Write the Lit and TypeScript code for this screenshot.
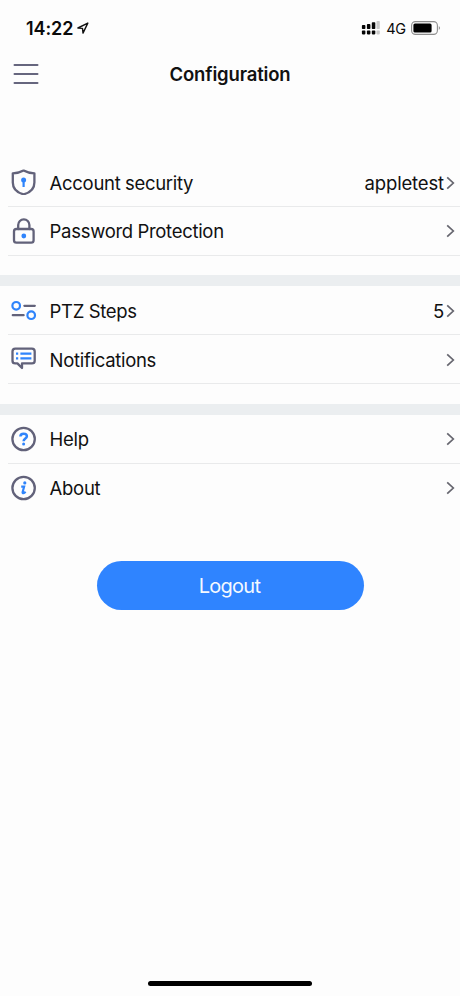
import { LitElement, html, css, svg, nothing, type TemplateResult } from "lit";
import { customElement, property } from "lit/decorators.js";

const icons: Record<string, TemplateResult> = {
  shield: svg`
    <path class="ink" d="M13 1.6C10 3.4 5.6 4.2 2.2 4.3V13.4C2.2 19.4 6.6 23.6 13 25.3C19.4 23.6 23.8 19.4 23.8 13.4V4.3C20.4 4.2 16 3.4 13 1.6Z"/>
    <circle class="dot" cx="13" cy="11" r="2.5"/>
    <path class="blue" d="M13 12V18"/>`,
  lock: svg`
    <path class="ink" d="M7.6 11V7A5.6 5.6 0 0 1 18.8 7V11"/>
    <rect class="ink" x="3.4" y="11" width="19.6" height="13.6" rx="2.4"/>
    <circle class="dot" cx="13.2" cy="18" r="2.4"/>`,
  steps: svg`
    <circle class="blue" cx="5.6" cy="8.8" r="3.8"/>
    <circle class="blue" cx="20.6" cy="18.2" r="3.8"/>
    <path class="ink" d="M13.8 8.8H24.2M2.2 18.2H13"/>`,
  message: svg`
    <path class="ink" d="M4.7 2.7H21.3Q24.1 2.7 24.1 5.4V14.7Q24.1 17.4 21.3 17.4H11.4V22L6.8 17.4H4.7Q1.9 17.4 1.9 14.7V5.4Q1.9 2.7 4.7 2.7Z"/>
    <path class="blue" d="M5.4 7.6H7.6M9.8 7.6H20.8M5.4 12.4H7.6M9.8 12.4H20.8"/>`,
  help: svg`
    <circle class="ink" cx="13" cy="13" r="11.2"/>
    <path class="blue bold" d="M9.8 10.6C9.8 8.6 11.1 7.7 13 7.7C15 7.7 16.3 8.7 16.3 10.3C16.3 12.6 13 12.6 13 15.3"/>
    <circle class="dot" cx="13" cy="18" r="1.5"/>`,
  info: svg`
    <circle class="ink" cx="13" cy="13" r="11.2"/>
    <circle class="dot" cx="14.2" cy="7.9" r="1.6"/>
    <path class="blue" d="M10.6 11.7H13.5L12 17.2C11.8 18.6 13.4 18.4 15 16.8"/>`,
};

@customElement("status-bar")
class StatusBar extends LitElement {
  static styles = css`
    :host { display: flex; align-items: center; height: 56px; box-sizing: border-box; padding: 0 19px 0 26px; color: #0a0a0a; }
    .time { font-size: 18px; font-weight: 600; letter-spacing: -0.1px; width: 51px; white-space: nowrap; }
    .gap { flex: 1; }
    .net { font-size: 14.5px; margin: 0 5px 0 6px; letter-spacing: -0.2px; }
    svg { display: block; }
  `;
  render() {
    return html`
      <span class="time">14:22</span>
      <svg width="12" height="12" viewBox="0 0 12 12"><path d="M0.9 6L10.8 1.1L6 11.1L5.5 6.4Z" fill="none" stroke="#111" stroke-width="1.4" stroke-linejoin="round"/></svg>
      <span class="gap"></span>
      <svg width="19" height="14" viewBox="0 0 19 14">
        <g fill="#050505">
          <rect x="0.9" y="4.1" width="3.5" height="4" rx="0.8"/><rect x="5.9" y="3.1" width="3.5" height="5" rx="0.8"/><rect x="10.8" y="1.3" width="3.5" height="6.8" rx="0.8"/>
          <rect x="0.9" y="9.6" width="3.5" height="3.8" rx="0.8"/><rect x="5.9" y="9.6" width="3.5" height="3.8" rx="0.8"/><rect x="10.8" y="9.6" width="3.5" height="3.8" rx="0.8"/>
        </g>
        <g fill="#c9c9c9"><rect x="15.5" y="0" width="3.3" height="8.1" rx="0.8"/><rect x="15.5" y="9.6" width="3.3" height="3.8" rx="0.8"/></g>
      </svg>
      <span class="net">4G</span>
      <svg width="30" height="14" viewBox="0 0 30 14">
        <rect x="0.6" y="0.6" width="25.8" height="12.8" rx="3.8" fill="none" stroke="#8d8d8d" stroke-width="1.1"/>
        <rect x="2.4" y="2.4" width="18.2" height="9.2" rx="1.6" fill="#000"/>
        <path d="M27.8 4.9Q30.2 7 27.8 9.1Z" fill="#8d8d8d"/>
      </svg>`;
  }
}

@customElement("setting-row")
class SettingRow extends LitElement {
  @property() icon = "";
  @property() label = "";
  @property() value = "";
  @property({ type: Boolean }) last = false;
  static styles = css`
    :host { display: block; }
    .row { display: flex; align-items: center; height: 49px; box-sizing: border-box; margin-left: 8px; padding: 0 5px 0 3px; border-bottom: 1px solid #e9eaeb; color: #111; font-size: 18.5px; }
    .last { border-bottom-color: transparent; }
    .icon { width: 26px; height: 26px; margin-right: 12.6px; flex: none; }
    .label { flex: 1; white-space: nowrap; letter-spacing: -0.3px; word-spacing: -0.3px; padding-top: var(--text-drop, 2px); }
    .value { margin-right: 2px; letter-spacing: -0.15px; padding-top: var(--text-drop, 2px); }
    .ink { fill: none; stroke: #62627a; stroke-width: 2.3; stroke-linejoin: round; stroke-linecap: round; }
    .blue { fill: none; stroke: #2f84fb; stroke-width: 2.2; }
    .bold { stroke-width: 2.5; }
    .dot { fill: #2f84fb; }
    .chevron { width: 9px; height: 14px; flex: none; padding-top: calc(var(--text-drop, 2px) / 2); }
  `;
  render() {
    return html`<div class="row ${this.last ? "last" : ""}">
      <svg class="icon" viewBox="0.4 0 26 26">${icons[this.icon]}</svg>
      <span class="label">${this.label}</span>
      ${this.value ? html`<span class="value">${this.value}</span>` : nothing}
      <svg class="chevron" viewBox="0 0 9 14"><path d="M1.2 1.3L7.3 7L1.2 12.7" fill="none" stroke="#66666f" stroke-width="1.7"/></svg>
    </div>`;
  }
}

@customElement("app-root")
class AppRoot extends LitElement {
  static styles = css`
    :host { display: flex; flex-direction: column; height: 996px; box-sizing: border-box; background: #fdfdfd; font-family: Inter, "Liberation Sans", sans-serif; }
    .nav { display: grid; grid-template-columns: 60px 1fr 60px; align-items: center; height: 36px; margin-bottom: 66px; }
    .menu { display: block; margin: 0 0 1px 13px; }
    h1 { margin: 0 0 1px; font-size: 18.5px; letter-spacing: -0.15px; font-weight: 600; text-align: center; color: #111; }
    .band { height: 11px; margin-top: 19px; background: #ebeef0; }
    .band.lower { margin-top: 20px; }
    .level { --text-drop: 0px; }
    .logout { align-self: center; width: 267px; height: 49px; margin-top: 48px; border: 0; border-radius: 25px; background: #2f84ff; color: #f4f9ff; font: 400 20px Inter, sans-serif; letter-spacing: -0.75px; padding: 1px 1px 0 0; }
    .home { align-self: center; width: 164px; height: 5px; margin-top: auto; margin-bottom: 10px; border-radius: 3px; background: #000; }
  `;
  render() {
    return html`
      <status-bar></status-bar>
      <div class="nav">
        <svg class="menu" width="26" height="22" viewBox="0 0 26 22"><path d="M1.5 2H24.5M1.5 11H24.5M1.5 20H24.5" stroke="#66667e" stroke-width="2" stroke-linecap="round"/></svg>
        <h1>Configuration</h1>
      </div>
      <setting-row icon="shield" label="Account security" value="appletest"></setting-row>
      <setting-row class="level" icon="lock" label="Password Protection"></setting-row>
      <div class="band"></div>
      <setting-row icon="steps" label="PTZ Steps" value="5"></setting-row>
      <setting-row icon="message" label="Notifications"></setting-row>
      <div class="band lower"></div>
      <setting-row class="level" icon="help" label="Help"></setting-row>
      <setting-row class="level" icon="info" label="About" last></setting-row>
      <button class="logout">Logout</button>
      <div class="home"></div>`;
  }
}
